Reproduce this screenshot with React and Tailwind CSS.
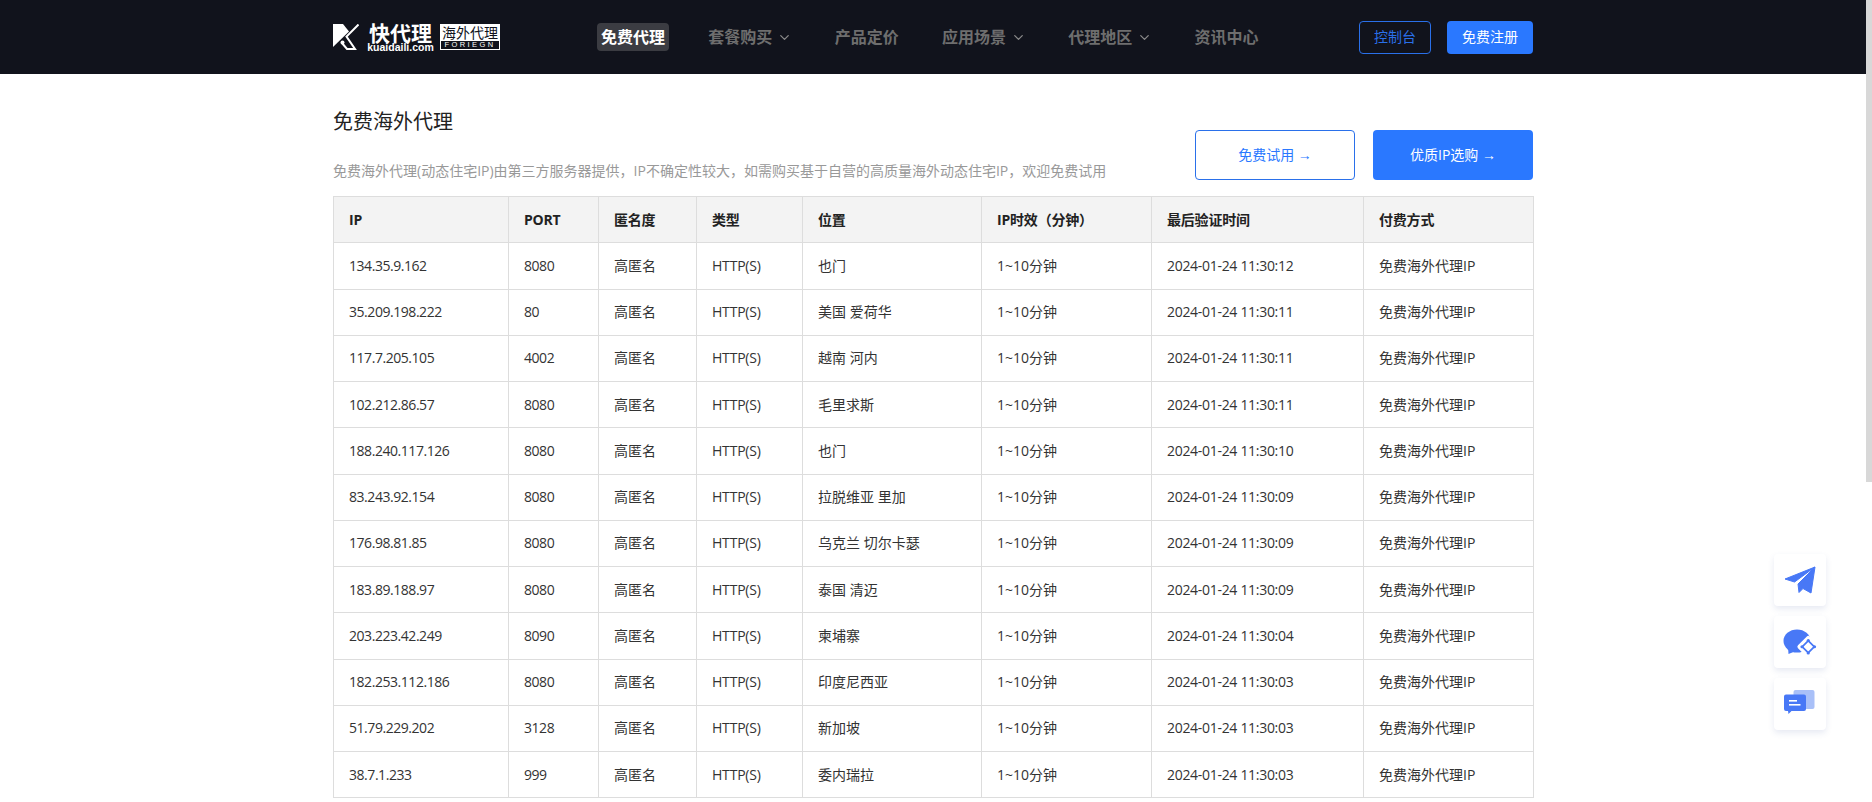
import { ChevronDown } from "lucide-react";

const font = "font-['Open_Sans','Noto_Sans_CJK_SC',sans-serif]";

const rows = [
  ["134.35.9.162", "8080", "也门", "2024-01-24 11:30:12"],
  ["35.209.198.222", "80", "美国 爱荷华", "2024-01-24 11:30:11"],
  ["117.7.205.105", "4002", "越南 河内", "2024-01-24 11:30:11"],
  ["102.212.86.57", "8080", "毛里求斯", "2024-01-24 11:30:11"],
  ["188.240.117.126", "8080", "也门", "2024-01-24 11:30:10"],
  ["83.243.92.154", "8080", "拉脱维亚 里加", "2024-01-24 11:30:09"],
  ["176.98.81.85", "8080", "乌克兰 切尔卡瑟", "2024-01-24 11:30:09"],
  ["183.89.188.97", "8080", "泰国 清迈", "2024-01-24 11:30:09"],
  ["203.223.42.249", "8090", "柬埔寨", "2024-01-24 11:30:04"],
  ["182.253.112.186", "8080", "印度尼西亚", "2024-01-24 11:30:03"],
  ["51.79.229.202", "3128", "新加坡", "2024-01-24 11:30:03"],
  ["38.7.1.233", "999", "委内瑞拉", "2024-01-24 11:30:03"],
];

const heads = ["IP", "PORT", "匿名度", "类型", "位置", "IP时效（分钟）", "最后验证时间", "付费方式"];
const widths = ["w-[175px]", "w-[90px]", "w-[98px]", "w-[106px]", "w-[179px]", "w-[170px]", "w-[212px]", "w-[170px]"];

const Logo = () => (
  <div className="flex items-center w-[167px] h-[26px] text-white">
    <svg width="26" height="26" viewBox="0 0 26 26" className="shrink-0">
      <path d="M0 0H10L16 7.5L0 23Z" fill="#fff" />
      <path d="M25.5 0.5L13.5 12.5L22 25H14L8.5 18.5" fill="none" stroke="#fff" strokeWidth="2" />
      <circle cx="9.5" cy="18.5" r="2" fill="#fff" />
    </svg>
    <div className="ml-[9px] w-[65px] flex flex-col items-center">
      <span className="text-[21px] h-[19px] leading-[19px] font-bold font-['Noto_Sans_CJK_SC',sans-serif]">快代理</span>
      <span className="text-[10.5px] h-[8px] leading-[8px] mt-[1px] font-bold font-['Liberation_Sans',sans-serif]">kuaidaili.com</span>
    </div>
    <div className="ml-[7px] w-[61px] flex flex-col">
      <span className="h-[16px] bg-white text-[#11131c] text-[14px] leading-[16px] text-center font-['Noto_Sans_CJK_SC',sans-serif]">海外代理</span>
      <span className="h-[10px] border border-white text-[7.5px] leading-[8px] text-center tracking-[2.4px] font-['Liberation_Sans',sans-serif]">FORIEGN</span>
    </div>
  </div>
);

const NavItem = ({ children, arrow, active }) => (
  <div
    className={`flex items-center h-7 px-1 text-base font-bold rounded-sm ${
      active ? "bg-[#3b3c42] text-white" : "text-[#6e6e6e]"
    }`}
  >
    {children}
    {arrow && <ChevronDown size={15} strokeWidth={2} className="ml-[5px] mr-[-1px] text-[#8a8a8a]" />}
  </div>
);

const Header = () => (
  <header className="h-[74px] bg-[#11131c]">
    <div className="mx-auto w-[1200px] h-full flex items-center">
      <Logo />
      <nav className="ml-[97px] flex items-center gap-[35.3px]">
        <NavItem active>免费代理</NavItem>
        <NavItem arrow>套餐购买</NavItem>
        <NavItem>产品定价</NavItem>
        <NavItem arrow>应用场景</NavItem>
        <NavItem arrow>代理地区</NavItem>
        <NavItem>资讯中心</NavItem>
      </nav>
      <div className="ml-auto flex gap-4">
        <button className="w-[72px] h-[33px] border border-[#2a70ea] text-[#2a70ea] text-sm rounded">控制台</button>
        <button className="w-[86px] h-[33px] bg-[#2a78ff] text-white text-sm rounded">免费注册</button>
      </div>
    </div>
  </header>
);

const ProxyTable = () => (
  <table className="w-full table-fixed border-collapse text-sm text-[#333]">
    <colgroup>
      {widths.map((w, i) => (
        <col key={i} className={w} />
      ))}
    </colgroup>
    <thead>
      <tr className="h-[46.25px] bg-[#f3f3f3]">
        {heads.map((h) => (
          <th key={h} className="border border-[#ddd] px-[15px] text-left font-bold text-[#222] tracking-[-0.2px]">
            {h}
          </th>
        ))}
      </tr>
    </thead>
    <tbody>
      {rows.map((r) => (
        <tr key={r[0]} className="h-[46.25px]">
          <td className="border border-[#ddd] px-[15px] tracking-[-0.45px]">{r[0]}</td>
          <td className="border border-[#ddd] px-[15px] tracking-[-0.45px]">{r[1]}</td>
          <td className="border border-[#ddd] px-[15px]">高匿名</td>
          <td className="border border-[#ddd] px-[15px] tracking-[-0.2px]">HTTP(S)</td>
          <td className="border border-[#ddd] px-[15px]">{r[2]}</td>
          <td className="border border-[#ddd] px-[15px]">1~10分钟</td>
          <td className="border border-[#ddd] px-[15px] tracking-[-0.3px]">{r[3]}</td>
          <td className="border border-[#ddd] px-[15px]">免费海外代理IP</td>
        </tr>
      ))}
    </tbody>
  </table>
);

const SideCard = ({ children }) => (
  <div className="w-[52px] h-[52px] bg-white rounded shadow-[0_3px_6px_rgba(60,80,160,0.12)]">{children}</div>
);

const SideButtons = () => (
  <div className="absolute right-[46px] top-[554px] flex flex-col gap-[10px]">
    <SideCard>
      <svg width="52" height="52" viewBox="0 0 52 52">
        <path d="M41 13L11 25L20.5 28Z" fill="#4878f6" stroke="#4878f6" strokeLinejoin="round" />
        <path d="M41 13L24 30L25 38.5L29 34.5L37 39Z" fill="#4878f6" stroke="#4878f6" strokeLinejoin="round" />
      </svg>
    </SideCard>
    <SideCard>
      <svg width="52" height="52" viewBox="0 0 52 52">
        <ellipse cx="23" cy="25" rx="13.5" ry="11.5" fill="#4878f6" />
        <path d="M14 31L14.5 38L22 35Z" fill="#4878f6" />
        <rect x="26" y="22.5" width="16.5" height="16.5" rx="2" transform="rotate(45 34.25 30.75)" fill="#fff" />
        <rect x="30" y="26.5" width="8.5" height="8.5" transform="rotate(45 34.25 30.75)" fill="none" stroke="#4878f6" strokeWidth="1.7" />
        <circle cx="34.25" cy="24.5" r="1.6" fill="#4878f6" />
        <circle cx="40.5" cy="30.75" r="1.6" fill="#4878f6" />
        <circle cx="34.25" cy="37" r="1.6" fill="#4878f6" />
        <circle cx="28" cy="30.75" r="1.6" fill="#4878f6" />
      </svg>
    </SideCard>
    <SideCard>
      <svg width="52" height="52" viewBox="0 0 52 52">
        <rect x="19.5" y="12" width="21" height="19" rx="2" fill="#a9c0f8" />
        <path d="M12 16.5H30a2 2 0 0 1 2 2V31a2 2 0 0 1-2 2H17.5L14.5 36L14 33H12a2 2 0 0 1-2-2V18.5a2 2 0 0 1 2-2Z" fill="#4878f6" />
        <rect x="15" y="22" width="8" height="1.6" fill="#fff" />
        <rect x="15" y="26" width="11.5" height="1.6" fill="#fff" />
      </svg>
    </SideCard>
  </div>
);

export default function App() {
  return (
    <div className={`relative h-screen overflow-hidden bg-white pr-[6px] ${font}`}>
      <Header />
      <main className="mx-auto w-[1200px] pt-[34px]">
        <div className="flex justify-between">
          <div>
            <h1 className="text-xl leading-7 text-[#222]">免费海外代理</h1>
            <p className="mt-[24px] text-sm leading-[22px] text-[#999]">
              免费海外代理(动态住宅IP)由第三方服务器提供，IP不确定性较大，如需购买基于自营的高质量海外动态住宅IP，欢迎免费试用
            </p>
          </div>
          <div className="mt-[22px] flex gap-[18px]">
            <button className="w-[160px] h-[50px] border border-[#2a70ea] text-[#2a78ff] text-sm rounded">
              免费试用 <span className="text-sm font-['Liberation_Sans',sans-serif]">→</span>
            </button>
            <button className="w-[160px] h-[50px] bg-[#2a78ff] text-white text-sm rounded">
              优质IP选购 <span className="text-sm font-['Liberation_Sans',sans-serif]">→</span>
            </button>
          </div>
        </div>
        <div className="mt-[14px]">
          <ProxyTable />
        </div>
      </main>
      <div className="absolute right-0 top-0 w-[6px] h-[482px] bg-[#d8d8d8]" />
      <SideButtons />
    </div>
  );
}
